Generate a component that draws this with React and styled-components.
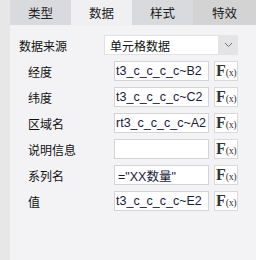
import React from "react"
import styled, {createGlobalStyle} from "styled-components"

const Global = createGlobalStyle`
  html, body {
    margin: 0;
    padding: 0;
    background: #f3f3f5;
  }
  body {
    font-family: "Noto Sans CJK SC", "Liberation Sans", sans-serif;
  }
`

const tabs = ["类型", "数据", "样式", "特效"]

const fields = [
  {label: "经度", value: "t3_c_c_c_c~B2"},
  {label: "纬度", value: "t3_c_c_c_c~C2"},
  {label: "区域名", value: "rt3_c_c_c_c~A2"},
  {label: "说明信息", value: ""},
  {label: "系列名", value: "=\"XX数量\"", pad: true},
  {label: "值", value: "t3_c_c_c_c~E2"},
]

const App = () => {
  return (
    <Page>
      <Global />
      <Strip />
      <Main>
        <TabBar>
          {tabs.map((t, i) => (
            <Tab key={t} active={i === 1} dark={i === 3}>{t}</Tab>
          ))}
        </TabBar>
        <SourceRow>
          <SourceLabel>数据来源</SourceLabel>
          <Select>
            <SelectText>单元格数据</SelectText>
            <SelectButton>
              <svg width="9" height="6" viewBox="0 0 9 6">
                <path d="M1 1l3.5 3.5L8 1" fill="none" stroke="#707070" strokeWidth="1" />
              </svg>
            </SelectButton>
          </Select>
        </SourceRow>
        {fields.map((f) => (
          <Row key={f.label}>
            <Label>{f.label}</Label>
            <Field pad={f.pad}>{f.value}</Field>
            <FxButton>
              <FxF>F</FxF><FxX>(x)</FxX>
            </FxButton>
          </Row>
        ))}
      </Main>
    </Page>
  )
}
export default App

const Page = styled.div`
  display: flex;
  width: 256px;
  height: 260px;
  overflow: hidden;
`
const Strip = styled.div`
  width: 10px;
  flex-shrink: 0;
  background-color: #e7e7e7;
`
const Main = styled.div`
  flex: 1;
  display: flex;
  flex-direction: column;
  background-color: #f3f3f5;
`
const TabBar = styled.div`
  display: grid;
  grid-template-columns: 61px 61px 61px 63px;
  height: 25px;
`
const Tab = styled.div`
  display: flex;
  justify-content: center;
  align-items: center;
  font-size: 12.5px;
  color: #222;
  background-color: ${(p) => (p.active ? "#f0f0f2" : p.dark ? "#d3d3d4" : "#d9dadd")};
`
const SourceRow = styled.div`
  display: flex;
  align-items: center;
  margin-top: 10px;
  padding-left: 9px;
  height: 20px;
`
const SourceLabel = styled.div`
  width: 85px;
  font-size: 12px;
  color: #111;
`
const Select = styled.div`
  width: 134px;
  height: 20px;
  box-sizing: border-box;
  display: flex;
  background-color: #fff;
  border: 1px solid #e2e2e4;
`
const SelectText = styled.div`
  flex: 1;
  display: flex;
  align-items: center;
  padding-left: 5px;
  font-size: 12px;
  color: #111;
`
const SelectButton = styled.div`
  width: 20px;
  display: flex;
  justify-content: center;
  align-items: center;
  background-color: #e4e4e7;
  margin: -1px -1px -1px 0;
`
const Row = styled.div`
  display: flex;
  align-items: center;
  margin-top: 6px;
  padding-left: 18px;
  height: 20px;
`
const Label = styled.div`
  width: 86px;
  font-size: 12px;
  color: #111;
`
const Field = styled.div`
  width: 95px;
  height: 20px;
  box-sizing: border-box;
  border: 1px solid #d4d4d6;
  background-color: #fff;
  display: flex;
  align-items: center;
  padding-left: ${(p) => (p.pad ? "3px" : "1px")};
  font-family: "Liberation Sans", "Noto Sans CJK SC", sans-serif;
  font-size: 12.5px;
  color: #1a1a3a;
  white-space: nowrap;
  overflow: hidden;
`
const FxButton = styled.div`
  width: 24px;
  height: 20px;
  box-sizing: border-box;
  margin-left: 5px;
  border: 1px solid #d9d9db;
  background-color: #fff;
  display: flex;
  justify-content: center;
  align-items: center;
  font-family: "Liberation Serif", serif;
  color: #333;
`
const FxF = styled.span`
  font-size: 16px;
  font-weight: bold;
  line-height: 1;
`
const FxX = styled.span`
  font-size: 10px;
  line-height: 1;
  margin-top: 3px;
  letter-spacing: -0.5px;
`
